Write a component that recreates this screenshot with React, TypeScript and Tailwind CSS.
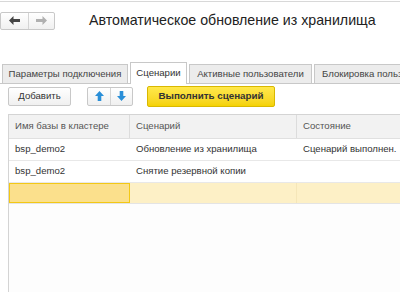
import React from "react";

const font = { fontFamily: '"Liberation Sans", Arial, sans-serif' };

function ArrowLeft({ color }: { color: string }) {
  return (
    <svg width="11" height="9" viewBox="0 0 11 9">
      <path d="M0 4.5 L4.5 0 L4.5 3 L11 3 L11 6 L4.5 6 L4.5 9 Z" fill={color} />
    </svg>
  );
}
function ArrowRight({ color }: { color: string }) {
  return (
    <svg width="11" height="9" viewBox="0 0 11 9">
      <path d="M11 4.5 L6.5 0 L6.5 3 L0 3 L0 6 L6.5 6 L6.5 9 Z" fill={color} />
    </svg>
  );
}
function ArrowUp() {
  return (
    <svg width="9" height="10" viewBox="0 0 9 10">
      <path d="M4.5 0 L9 5 L6.3 5 L6.3 10 L2.7 10 L2.7 5 L0 5 Z" fill="#2a8fd8" />
    </svg>
  );
}
function ArrowDown() {
  return (
    <svg width="9" height="10" viewBox="0 0 9 10">
      <path d="M4.5 10 L9 5 L6.3 5 L6.3 0 L2.7 0 L2.7 5 L0 5 Z" fill="#2a8fd8" />
    </svg>
  );
}

export default function App() {
  return (
    <div className="w-[400px] h-[292px] overflow-hidden bg-white relative text-[#333]" style={font}>
      <div className="h-px mt-px bg-[#d8d8d8]" />
      {/* header */}
      <div className="flex items-center h-[25px] mt-[6px]">
        <div className="flex h-[18px] w-[55px] border border-[#c8c8c8] rounded-[2px] bg-gradient-to-b from-white to-[#f0f0f0]">
          <div className="w-[28px] flex items-center justify-center border-r border-[#d4d4d4]">
            <ArrowLeft color="#444" />
          </div>
          <div className="flex-1 flex items-center justify-center">
            <ArrowRight color="#b0b0b0" />
          </div>
        </div>
        <div className="ml-[34px] text-[14.2px] text-[#222] leading-none mt-[-1px] whitespace-nowrap">
          Автоматическое обновление из хранилища
        </div>
      </div>
      {/* tabs */}
      <div className="flex items-end h-[25px] mt-[26px] pl-[2px] border-b border-[#c8c8c8] whitespace-nowrap">
        <div className="shrink-0 h-[19px] w-[126px] flex items-center justify-center text-[9.6px] text-[#444] bg-[#ececec] border border-b-0 border-[#c8c8c8]">
          Параметры подключения
        </div>
        <div className="shrink-0 h-[22px] w-[57px] ml-[2px] flex items-center justify-center text-[9.6px] text-[#333] bg-white border border-b-0 border-[#c8c8c8] mb-[-1px] pb-px">
          Сценарии
        </div>
        <div className="shrink-0 h-[19px] w-[123px] ml-[2px] flex items-center justify-center text-[9.6px] text-[#444] bg-[#ececec] border border-b-0 border-[#c8c8c8]">
          Активные пользователи
        </div>
        <div className="shrink-0 h-[19px] ml-[2px] pl-[7px] pr-[6px] flex items-center text-[9.6px] text-[#444] bg-[#ececec] border border-b-0 border-[#c8c8c8]">
          Блокировка пользователей
        </div>
      </div>
      {/* toolbar */}
      <div className="flex items-center h-[22px] mt-[1px] pl-[8px]">
        <div className="h-[19px] w-[63px] flex items-center justify-center text-[9.6px] text-[#333] border border-[#c8c8c8] rounded-[2px] bg-gradient-to-b from-white to-[#f0f0f0]">
          Добавить
        </div>
        <div className="ml-[16px] flex h-[19px] w-[46px] border border-[#c8c8c8] rounded-[2px] bg-gradient-to-b from-white to-[#f0f0f0]">
          <div className="w-[23px] flex items-center justify-center border-r border-[#d4d4d4]">
            <ArrowUp />
          </div>
          <div className="flex-1 flex items-center justify-center">
            <ArrowDown />
          </div>
        </div>
        <div className="ml-[14px] h-[21px] w-[128px] flex items-center justify-center text-[9.8px] font-bold text-[#333] border border-[#d9b800] rounded-[2px] bg-gradient-to-b from-[#ffe84a] to-[#f5d200]">
          Выполнить сценарий
        </div>
      </div>
      {/* table */}
      <div className="ml-[8px] mt-[7px] border-l border-t border-[#d4d4d4] h-[200px]">
        <div className="grid grid-cols-[121px_167px_1fr] h-[24px] bg-[#f2f2f2] border-b border-[#e0e0e0] text-[9.6px] text-[#555]">
          <div className="flex items-center pl-[6px] border-r border-[#dcdcdc]">Имя базы в кластере</div>
          <div className="flex items-center pl-[6px] border-r border-[#dcdcdc]">Сценарий</div>
          <div className="flex items-center pl-[6px]">Состояние</div>
        </div>
        <div className="grid grid-cols-[121px_167px_1fr] h-[22px] border-b border-[#e8e8e8] text-[9.6px] text-[#333]">
          <div className="flex items-center pl-[6px]">bsp_demo2</div>
          <div className="flex items-center pl-[6px]">Обновление из хранилища</div>
          <div className="flex items-center pl-[6px] whitespace-nowrap">Сценарий выполнен.</div>
        </div>
        <div className="grid grid-cols-[121px_167px_1fr] h-[22px] border-b border-[#e8e8e8] text-[9.6px] text-[#333]">
          <div className="flex items-center pl-[6px]">bsp_demo2</div>
          <div className="flex items-center pl-[6px]">Снятие резервной копии</div>
          <div className="flex items-center pl-[6px]"></div>
        </div>
        <div className="grid grid-cols-[121px_167px_1fr] h-[21px] border-b border-[#e4e4e4] bg-[#fdf0c6]">
          <div className="bg-[#fbe08c] border-[1.5px] border-[#f3c815]"></div>
          <div className="border-r border-[#f5e6b8]"></div>
          <div></div>
        </div>
        <div className="h-full bg-[#fdfdfd]" />
      </div>
    </div>
  );
}
